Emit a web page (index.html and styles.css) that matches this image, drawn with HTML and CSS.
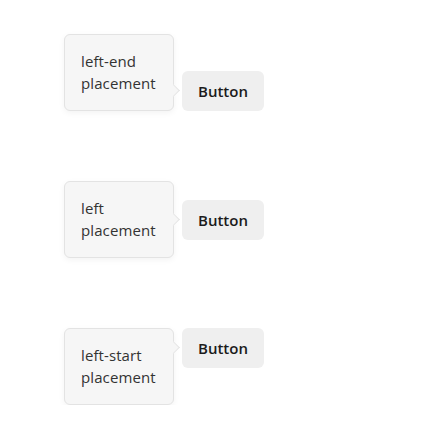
FILE: index.html
```html
<!DOCTYPE html>
<html>
<head>
<meta charset="utf-8">
<link rel="stylesheet" href="styles.css">
</head>
<body>
<div class="page">
  <div class="row row-end">
    <div class="popover"><span class="label">left-end placement</span><span class="arrow arrow-end"></span></div>
    <button class="btn">Button</button>
  </div>
  <div class="row row-center">
    <div class="popover"><span class="label">left placement</span><span class="arrow arrow-center"></span></div>
    <button class="btn">Button</button>
  </div>
  <div class="row row-start">
    <div class="popover"><span class="label">left-start placement</span><span class="arrow arrow-start"></span></div>
    <button class="btn">Button</button>
  </div>
</div>
</body>
</html>
```

FILE: styles.css
```css
html, body {
  margin: 0;
  padding: 0;
  background: #ffffff;
}
.page {
  display: flex;
  flex-direction: column;
  gap: 70px;
  padding: 34px 0 0 64px;
  font-family: "Open Sans", "Noto Sans", sans-serif;
}
.row {
  display: flex;
  gap: 8px;
}
.row-end { align-items: flex-end; }
.row-center { align-items: center; }
.row-start { align-items: flex-start; }
.popover {
  position: relative;
  box-sizing: border-box;
  width: 110px;
  height: 77px;
  padding: 0 16px;
  display: flex;
  align-items: center;
  background: #f6f6f6;
  border: 1px solid #e3e3e3;
  border-radius: 6px;
  box-shadow: 0 2px 6px rgba(0, 0, 0, 0.05);
  color: #333333;
  font-size: 15px;
  line-height: 21.6px;
  letter-spacing: 0.1px;
}
.label {
  display: block;
}
.arrow {
  position: absolute;
  right: -5px;
  width: 8px;
  height: 8px;
  background: #f6f6f6;
  border-top: 1px solid #e6e6e6;
  border-right: 1px solid #e6e6e6;
  transform: rotate(45deg);
}
.arrow-end { bottom: 15px; }
.arrow-center { top: 33px; }
.arrow-start { top: 14px; }
.btn {
  box-sizing: border-box;
  height: 40px;
  padding: 0 16px;
  border: none;
  border-radius: 6px;
  background: #efefef;
  color: #1b1b1b;
  font-family: "Open Sans", "Noto Sans", sans-serif;
  font-size: 15px;
  font-weight: 600;
}
```
